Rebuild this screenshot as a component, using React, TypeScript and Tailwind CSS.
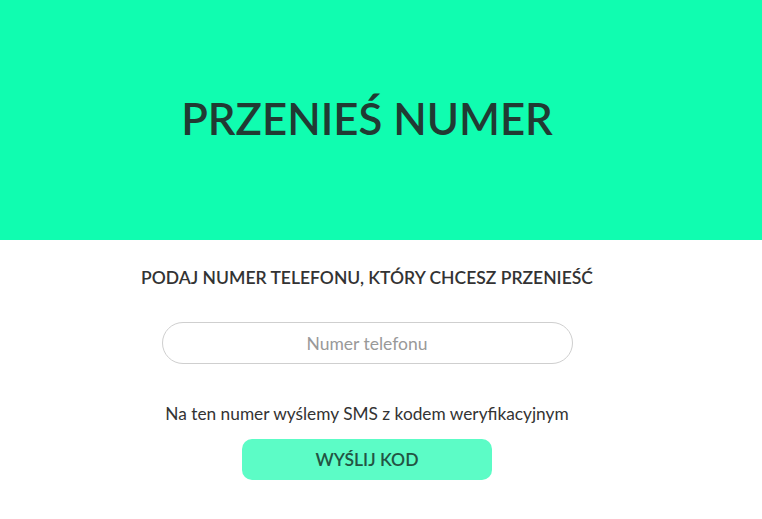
export default function App() {
  return (
    <div className="min-h-[519px] w-full bg-white font-['Lato',sans-serif] text-[#333]">
      <header className="flex h-[240px] items-center justify-center bg-[#10fdb0] pr-[28px]">
        <h1 className="mb-[3px] text-[43.7px] font-semibold text-[#213a33]">PRZENIEŚ NUMER</h1>
      </header>
      <main className="flex flex-col items-center pr-[28px]">
        <h2 className="mt-[25px] text-[17.5px] font-semibold text-[#333]">PODAJ NUMER TELEFONU, KTÓRY CHCESZ PRZENIEŚĆ</h2>
        <input
          type="text"
          placeholder="Numer telefonu"
          className="mt-[31px] h-[42px] w-[411px] rounded-full border border-[#cfcfcf] text-center text-[17.5px] text-[#333] outline-none placeholder:text-[#999]"
        />
        <p className="mt-[37px] text-[17.3px] text-[#333]">Na ten numer wyślemy SMS z kodem weryfikacyjnym</p>
        <button className="mt-[12px] h-[41px] w-[250px] rounded-[10px] bg-[#5cfcc6] text-[17.5px] font-semibold text-[#235443]">
          WYŚLIJ KOD
        </button>
      </main>
    </div>
  );
}
